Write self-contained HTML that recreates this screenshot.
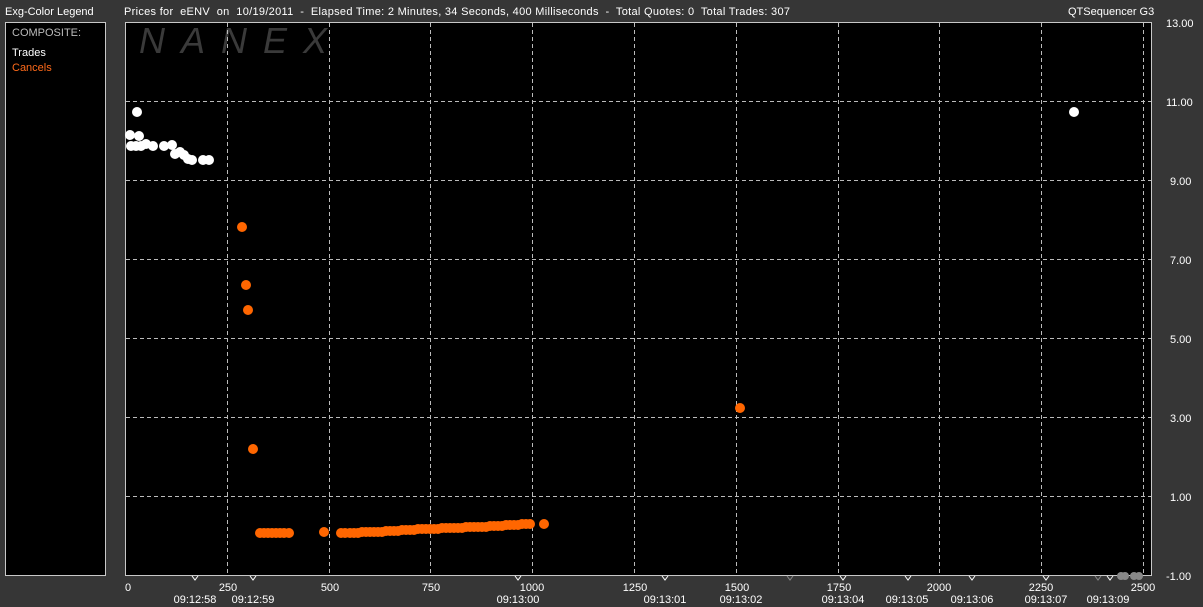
<!DOCTYPE html>
<html><head><meta charset="utf-8"><style>
body{margin:0;width:1203px;height:607px;background:#363636;overflow:hidden;font-family:"Liberation Sans",sans-serif;}
svg{display:block}
text{font-family:"Liberation Sans",sans-serif;font-size:11px;fill:#fff;white-space:pre}
</style></head><body>
<svg width="1203" height="607" viewBox="0 0 1203 607" xml:space="preserve">
<rect x="0" y="0" width="1203" height="607" fill="#363636"/>
<text x="5" y="15">Exg-Color Legend</text>
<text x="124" y="15" textLength="666" lengthAdjust="spacing">Prices for  eENV  on  10/19/2011  -  Elapsed Time: 2 Minutes, 34 Seconds, 400 Milliseconds  -  Total Quotes: 0  Total Trades: 307</text>
<text x="1068" y="15">QTSequencer G3</text>
<rect x="5.5" y="22.5" width="100" height="553" fill="#000" stroke="#c8c8c8"/>
<text x="12" y="36" style="fill:#bbb">COMPOSITE:</text>
<text x="12" y="56">Trades</text>
<text x="12" y="71" style="fill:#ff6a1a">Cancels</text>
<rect x="125.5" y="22.5" width="1026" height="553" fill="#000" stroke="#c8c8c8"/>
<text x="139" y="53" textLength="188" lengthAdjust="spacing" style="font-size:36px;fill:#3a3a3a;font-style:italic">NANEX</text>
<g stroke="#bbb" stroke-dasharray="4,3" stroke-width="1">
<line x1="227.5" y1="23" x2="227.5" y2="575"/><line x1="329.5" y1="23" x2="329.5" y2="575"/><line x1="430.5" y1="23" x2="430.5" y2="575"/><line x1="532.5" y1="23" x2="532.5" y2="575"/><line x1="634.5" y1="23" x2="634.5" y2="575"/><line x1="736.5" y1="23" x2="736.5" y2="575"/><line x1="838.5" y1="23" x2="838.5" y2="575"/><line x1="939.5" y1="23" x2="939.5" y2="575"/><line x1="1041.5" y1="23" x2="1041.5" y2="575"/><line x1="1143.5" y1="23" x2="1143.5" y2="575"/>
<line x1="126" y1="101.5" x2="1151" y2="101.5"/><line x1="126" y1="180.5" x2="1151" y2="180.5"/><line x1="126" y1="259.5" x2="1151" y2="259.5"/><line x1="126" y1="338.5" x2="1151" y2="338.5"/><line x1="126" y1="417.5" x2="1151" y2="417.5"/><line x1="126" y1="496.5" x2="1151" y2="496.5"/>
</g>
<g fill="#fff">
<circle cx="137" cy="112" r="5"/><circle cx="1074" cy="112" r="5"/>
<circle cx="130" cy="135" r="5"/><circle cx="139" cy="136" r="5"/>
<circle cx="131" cy="146" r="5"/><circle cx="136" cy="146" r="5"/><circle cx="141" cy="146" r="5"/><circle cx="146" cy="144" r="5"/><circle cx="153" cy="146" r="5"/><circle cx="164" cy="146" r="5"/><circle cx="172" cy="145" r="5"/><circle cx="175" cy="154" r="5"/><circle cx="184" cy="155" r="5"/><circle cx="188" cy="159" r="5"/><circle cx="192" cy="160" r="5"/><circle cx="203" cy="160" r="5"/><circle cx="209" cy="160" r="5"/><circle cx="180" cy="152" r="5"/>
</g>
<g fill="#ff6600">
<circle cx="242" cy="227" r="5"/><circle cx="246" cy="285" r="5"/><circle cx="248" cy="310" r="5"/><circle cx="253" cy="449" r="5"/><circle cx="740" cy="408" r="5"/>
<circle cx="260" cy="533" r="5"/><circle cx="264" cy="533" r="5"/><circle cx="268" cy="533" r="5"/><circle cx="272" cy="533" r="5"/><circle cx="276" cy="533" r="5"/><circle cx="280" cy="533" r="5"/><circle cx="284" cy="533" r="5"/><circle cx="289" cy="533" r="5"/>
<circle cx="324" cy="532" r="5"/>
<circle cx="341" cy="533" r="5"/><circle cx="345" cy="533" r="5"/><circle cx="350" cy="533" r="5"/><circle cx="354" cy="533" r="5"/><circle cx="358" cy="533" r="5"/><circle cx="362" cy="532" r="5"/><circle cx="366" cy="532" r="5"/><circle cx="370" cy="532" r="5"/><circle cx="374" cy="532" r="5"/><circle cx="378" cy="532" r="5"/><circle cx="382" cy="532" r="5"/><circle cx="386" cy="531" r="5"/><circle cx="390" cy="531" r="5"/><circle cx="394" cy="531" r="5"/><circle cx="398" cy="531" r="5"/><circle cx="402" cy="530" r="5"/><circle cx="406" cy="530" r="5"/><circle cx="410" cy="530" r="5"/><circle cx="414" cy="530" r="5"/><circle cx="418" cy="529" r="5"/><circle cx="422" cy="529" r="5"/><circle cx="426" cy="529" r="5"/><circle cx="430" cy="529" r="5"/><circle cx="434" cy="529" r="5"/><circle cx="438" cy="529" r="5"/><circle cx="442" cy="528" r="5"/><circle cx="446" cy="528" r="5"/><circle cx="450" cy="528" r="5"/><circle cx="454" cy="528" r="5"/><circle cx="458" cy="528" r="5"/><circle cx="462" cy="528" r="5"/><circle cx="466" cy="527" r="5"/><circle cx="470" cy="527" r="5"/><circle cx="474" cy="527" r="5"/><circle cx="478" cy="527" r="5"/><circle cx="482" cy="527" r="5"/><circle cx="486" cy="527" r="5"/><circle cx="490" cy="526" r="5"/><circle cx="494" cy="526" r="5"/><circle cx="498" cy="526" r="5"/><circle cx="502" cy="526" r="5"/><circle cx="506" cy="525" r="5"/><circle cx="510" cy="525" r="5"/><circle cx="514" cy="525" r="5"/><circle cx="518" cy="525" r="5"/><circle cx="522" cy="524" r="5"/><circle cx="526" cy="524" r="5"/><circle cx="530" cy="524" r="5"/><circle cx="544" cy="524" r="5"/>
</g>
<g fill="none" stroke="#fff" stroke-width="1">
<path d="M192 576 L195 580 L198 576"/><path d="M250 576 L253 580 L256 576"/><path d="M515 576 L518 580 L521 576"/><path d="M662 576 L665 580 L668 576"/><path d="M787 576 L790 580 L793 576" stroke="#888"/><path d="M840 576 L843 580 L846 576"/><path d="M905 576 L908 580 L911 576"/><path d="M969 576 L972 580 L975 576"/><path d="M1043 576 L1046 580 L1049 576"/><path d="M1095 576 L1098 580 L1101 576" stroke="#888"/><path d="M1107 576 L1110 580 L1113 576"/>
</g>
<g fill="#888"><circle cx="1121" cy="576" r="4"/><circle cx="1125" cy="576" r="4"/><circle cx="1134" cy="576" r="4"/><circle cx="1139" cy="576" r="4"/></g>
<g text-anchor="middle">
<text x="128" y="591">0</text><text x="228" y="591">250</text><text x="330" y="591">500</text><text x="431" y="591">750</text><text x="532" y="591">1000</text><text x="635" y="591">1250</text><text x="737" y="591">1500</text><text x="839" y="591">1750</text><text x="939" y="591">2000</text><text x="1041" y="591">2250</text><text x="1143" y="591">2500</text>
<text x="195" y="603">09:12:58</text><text x="253" y="603">09:12:59</text><text x="518" y="603">09:13:00</text><text x="665" y="603">09:13:01</text><text x="741" y="603">09:13:02</text><text x="843" y="603">09:13:04</text><text x="907" y="603">09:13:05</text><text x="972" y="603">09:13:06</text><text x="1046" y="603">09:13:07</text><text x="1108" y="603">09:13:09</text>
</g>
<g style="font-size:12px">
<text x="1166" y="27">13.00</text><text x="1166" y="106">11.00</text><text x="1170" y="185">9.00</text><text x="1170" y="264">7.00</text><text x="1170" y="343">5.00</text><text x="1170" y="422">3.00</text><text x="1170" y="501">1.00</text><text x="1166" y="580">-1.00</text>
</g>
</svg>
</body></html>
